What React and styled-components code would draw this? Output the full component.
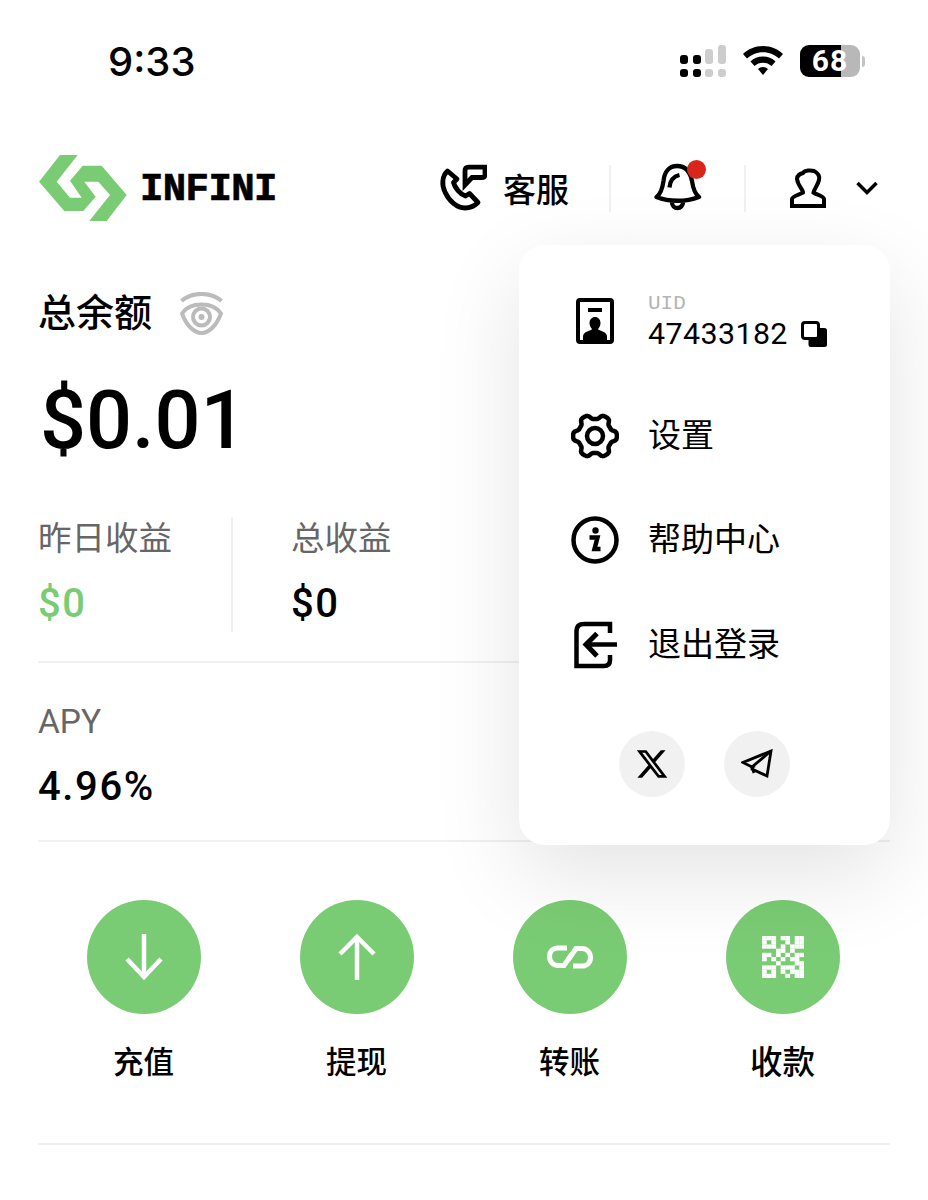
import React from 'react';
import styled, { createGlobalStyle } from 'styled-components';
import { FaXTwitter } from 'react-icons/fa6';

const CJK = `Roboto, 'Noto Sans CJK SC', sans-serif`;
const GREEN = '#7acc74';

const GlobalStyle = createGlobalStyle`
  html, body {
    margin: 0;
    background: #fff;
  }
  body {
    font-family: ${CJK};
    color: #000;
  }
`;

const Screen = styled.div`
  position: relative;
  width: 928px;
  height: 1200px;
  overflow: hidden;
  background: #fff;
`;

const StatusBar = styled.div`
  display: flex;
  align-items: center;
  justify-content: space-between;
  height: 32px;
  padding: 45px 63px 0 108px;
`;

const Time = styled.div`
  margin-top: 2px;
  font-family: Inter, sans-serif;
  font-size: 40px;
  font-weight: 500;
  line-height: 32px;
`;

const StatusIcons = styled.div`
  display: flex;
  align-items: center;
  gap: 17px;
`;

const Battery = styled.div`
  width: 60px;
  height: 32px;
  border-radius: 9px;
  background: linear-gradient(90deg, #000 0 41px, #b8b8b8 41px);
  color: #fff;
  font-size: 30px;
  font-weight: 700;
  line-height: 32px;
  text-align: center;
  letter-spacing: 1px;
`;

const BatteryWrap = styled.div`
  display: flex;
  align-items: center;
  gap: 2px;
`;

const BatteryNub = styled.div`
  width: 3px;
  height: 11px;
  border-radius: 0 3px 3px 0;
  background: #c4c4c4;
`;

const Header = styled.header`
  display: flex;
  align-items: center;
  height: 68px;
  margin-top: 77px;
  padding: 0 50px 0 39px;
`;

const Brand = styled.div`
  display: flex;
  align-items: center;
  gap: 13px;
  margin-right: auto;
`;

const BrandName = styled.div`
  padding-top: 5px;
  font-family: 'Liberation Mono', monospace;
  font-size: 39px;
  font-weight: 700;
  letter-spacing: -0.6px;
  line-height: 1;
  -webkit-text-stroke: 0.7px #000;
`;

const Support = styled.div`
  display: flex;
  align-items: center;
  gap: 16px;
  font-size: 33px;
  font-weight: 500;
`;

const HeaderRule = styled.div`
  width: 2px;
  height: 47px;
  background: #f0f0f0;
  margin: ${({ $margin }) => $margin};
`;

const BellWrap = styled.div`
  position: relative;
  width: 48px;
  height: 50px;
`;

const BellDot = styled.span`
  position: absolute;
  top: -3px;
  right: -4px;
  width: 19px;
  height: 19px;
  border-radius: 50%;
  background: #d9261c;
`;

const UserButton = styled.div`
  display: flex;
  align-items: center;
  gap: 30px;
`;

const Section = styled.section`
  margin: 0 38px;
  border-bottom: 2px solid #f0f0f0;
`;

const BalanceHead = styled.div`
  display: flex;
  align-items: center;
  gap: 28px;
  margin-top: 65px;
  height: 52px;
`;

const BalanceTitle = styled.div`
  font-size: 38px;
  font-weight: 500;
  line-height: 50px;
`;

const BalanceAmount = styled.div`
  margin: 32px 0 0 2px;
  font-size: 81px;
  font-weight: 500;
  line-height: 100px;
`;

const Stats = styled.div`
  display: flex;
  margin-top: 46px;
  padding-bottom: 29px;
`;

const Stat = styled.div`
  width: ${({ $width }) => $width};
  height: 115px;
  box-sizing: border-box;
  padding-top: 2px;
  border-right: ${({ $rule }) => ($rule ? '2px solid #f0f0f0' : 'none')};
  margin-right: ${({ $rule }) => ($rule ? '58px' : '0')};
`;

const Label = styled.div`
  font-size: 33.5px;
  line-height: 40px;
  color: #666;
`;

const Value = styled.div`
  margin-top: 22px;
  font-size: 40px;
  font-weight: 500;
  line-height: 46px;
  letter-spacing: 1.6px;
  color: ${({ $green }) => ($green ? GREEN : '#000')};
`;

const ApyBlock = styled.div`
  padding: 39px 0 30px;
`;

const Actions = styled.div`
  display: grid;
  grid-template-columns: repeat(4, 213px);
  margin-left: -1px;
  padding: 58px 0 60px;
`;

const Action = styled.div`
  display: flex;
  flex-direction: column;
  align-items: center;
  gap: 29px;
`;

const ActionCircle = styled.div`
  display: flex;
  align-items: center;
  justify-content: center;
  width: 114px;
  height: 114px;
  border-radius: 50%;
  background: ${GREEN};
`;

const ActionLabel = styled.div`
  font-size: ${({ $size }) => $size || '30.5px'};
  font-weight: 500;
  line-height: 40px;
`;

const Menu = styled.div`
  position: absolute;
  top: 245px;
  left: 519px;
  width: 371px;
  height: 600px;
  border-radius: 26px;
  background: #fff;
  box-shadow: 0 30px 90px rgba(0, 0, 0, 0.11);
  padding: 0 0 0 52px;
  box-sizing: border-box;
`;

const MenuRow = styled.div`
  display: flex;
  align-items: center;
  height: 104.5px;
  gap: 29px;
  font-size: 33px;
  line-height: 40px;
`;

const IconSlot = styled.div`
  display: flex;
  align-items: center;
  justify-content: center;
  flex: none;
  width: 48px;
`;

const UidRow = styled(MenuRow)`
  margin: 24px 0 10px;
`;

const UidBlock = styled.div`
  margin-top: 5px;
`;

const UidLabel = styled.div`
  font-family: 'Liberation Mono', monospace;
  font-size: 21px;
  line-height: 18px;
  color: #b4b4b4;
`;

const UidValue = styled.div`
  display: flex;
  align-items: center;
  gap: 13px;
  margin-top: 3px;
  font-size: 30.4px;
  line-height: 36px;
  letter-spacing: 0.4px;
`;

const Socials = styled.div`
  display: flex;
  gap: 39px;
  margin: 34px 0 0 48px;
`;

const SocialButton = styled.div`
  display: flex;
  align-items: center;
  justify-content: center;
  width: 66px;
  height: 66px;
  border-radius: 50%;
  background: #f1f1f1;
`;

const Signal = () => (
  <svg width="46" height="32" viewBox="0 0 46 32">
    <g fill="#000">
      <rect x="0" y="10" width="8" height="9" rx="3" />
      <rect x="13" y="10" width="8" height="9" rx="3" />
      <rect x="0" y="24" width="8" height="8" rx="3" />
      <rect x="13" y="24" width="8" height="8" rx="3" />
    </g>
    <g fill="#cdcdcd">
      <rect x="25" y="4" width="8" height="15" rx="3" />
      <rect x="38" y="0" width="8" height="19" rx="3" />
      <rect x="25" y="24" width="8" height="8" rx="3" />
      <rect x="38" y="24" width="8" height="8" rx="3" />
    </g>
  </svg>
);

const Wifi = () => (
  <svg width="40" height="30" viewBox="0 0 40 30" fill="#000">
    <path d="M20 0C28 0 35 3 40 8L36 12.500C32 8.700 26.300 6.200 20 6.200S8 8.700 4 12.500L0 8C5 3 12 0 20 0Z" />
    <path d="M20 10.500C25 10.500 29.300 12.300 32.500 15.500L28.500 20C26.300 17.900 23.300 16.700 20 16.700S13.700 17.900 11.500 20L7.500 15.500C10.700 12.300 15 10.500 20 10.500Z" />
    <path d="M20 21C22 21 23.700 21.700 25 23L20 29L15 23C16.300 21.700 18 21 20 21Z" />
  </svg>
);

const Logo = () => (
  <svg width="88" height="66" viewBox="0 0 88 66" fill={GREEN}>
    <path d="M21 0H38.700L17.700 26.700L31 42.700H42.700L31 25.700L43.700 10.700H62.700L87.700 40L67.700 66H50.300L71 40L59.300 26.700H45.300L56.700 41.700L44.300 56H25.300L0 26.700Z" />
  </svg>
);

const PhoneChat = () => (
  <svg width="48" height="48" viewBox="0 0 48 48" fill="none" stroke="#000" strokeWidth="4.800">
    <path d="M8.500 7C3 12 2.500 21 6 28C10 37 18 44 26 44C31 44 35 42.500 39 38.500L30.500 29.500L26.500 32C21 30 16 24 14.500 18.500L18 15Z" strokeLinejoin="round" />
    <path d="M26 21V7C26 4.500 27 3.200 29.500 3.200H46V10.500C46 12.500 45 13.500 43 13.500H33Z" />
  </svg>
);

const Bell = () => (
  <svg width="48" height="50" viewBox="0 0 48 50" fill="none" stroke="#000" strokeWidth="4.300">
    <path d="M2.500 34C7 31 8.500 25 9.500 18C10.500 8 16 3 23 3C31 3 36 8 38 18C39 25 41 31 45 34C32 39 15 39 2.500 34Z" strokeLinejoin="round" />
    <path d="M15.500 24.500C16 18 19 13.500 25.500 12" />
    <path d="M18 39.500A5.500 5.500 0 1 0 29 39.500" />
  </svg>
);

const User = () => (
  <svg width="36" height="40" viewBox="0 0 36 40" fill="none" stroke="#000" strokeWidth="4">
    <path d="M2 38V31C2 28 9 27 13 24.500C13.500 22 8 18 7 11C7 7 10 6 13 5C15 2 21 2 24 3C28 5 30 8 29 12C28 17 24 21 23.500 24.500C27 27 34 28 34 31V38Z" />
  </svg>
);

const Chevron = () => (
  <svg width="22" height="14" viewBox="0 0 22 14" fill="none" stroke="#000" strokeWidth="3.500">
    <path d="M1.500 2L11 11.500L20.500 2" />
  </svg>
);

const Eye = () => (
  <svg width="43" height="43" viewBox="0 0 43 43" fill="none" stroke="#bbb" strokeWidth="4">
    <path d="M1.500 9C12 -0.500 31 -0.500 41.500 9" />
    <path d="M2 21.500C10 9.500 33 9.500 41 21.500C36 35 28 41 21.500 41C15 41 7 35 2 21.500Z" />
    <circle cx="21.500" cy="25" r="8.500" />
    <circle cx="21.500" cy="25" r="3" fill="#bbb" stroke="none" />
  </svg>
);

const IdCard = () => (
  <svg width="38" height="46" viewBox="0 0 38 46" fill="#000">
    <path fillRule="evenodd" d="M4 0H34A4 4 0 0 1 38 4V42A4 4 0 0 1 34 46H4A4 4 0 0 1 0 42V4A4 4 0 0 1 4 0ZM4 4V42H34V4Z" />
    <rect x="12" y="10" width="14" height="4" />
    <path d="M19 19C22 19 24.500 21.500 24.500 25C24.500 28 23 30 22 31C23 33 30 33 31 38V43H7V38C8 33 15 33 16 31C15 30 13.500 28 13.500 25C13.500 21.500 16 19 19 19Z" />
  </svg>
);

const gearPath = () => {
  const points = [];
  for (let i = 0; i < 120; i++) {
    const a = (i / 120) * Math.PI * 2;
    const r = 19.500 + 2.500 * Math.tanh(2 * Math.cos(a * 6));
    points.push(`${(24 + r * Math.cos(a)).toFixed(2)} ${(24 + r * Math.sin(a)).toFixed(2)}`);
  }
  return `M${points.join('L')}Z`;
};

const Gear = () => (
  <svg width="48" height="48" viewBox="0 0 48 48" fill="none" stroke="#000" strokeWidth="4.500">
    <path d={gearPath()} strokeLinejoin="round" />
    <circle cx="24" cy="24" r="8" />
  </svg>
);

const Info = () => (
  <svg width="48" height="48" viewBox="0 0 48 48" fill="none">
    <circle cx="24" cy="24" r="21.500" stroke="#000" strokeWidth="4.500" />
    <circle cx="24.500" cy="14.500" r="3.200" fill="#000" />
    <path d="M18.500 21.500H26.500L23.500 33H29.500" stroke="#000" strokeWidth="4.500" />
  </svg>
);

const Logout = () => (
  <svg width="43" height="48" viewBox="0 0 43 48" fill="none" stroke="#000" strokeWidth="4.500">
    <path d="M36 12V3H10C5 3 2.500 5.500 2.500 10V45H30C34 45 36 43 36 39V34" />
    <path d="M43 23.500H13" />
    <path d="M23 12.500L12 23.500L23 35" strokeWidth="5" />
  </svg>
);

const Copy = () => (
  <svg width="26" height="26" viewBox="0 0 26 26">
    <path d="M10 7H23.500A2.500 2.500 0 0 1 26 9.500V23.500A2.500 2.500 0 0 1 23.500 26H10A2.500 2.500 0 0 1 7.500 23.500V9.500A2.500 2.500 0 0 1 10 7Z" fill="#000" />
    <rect x="1.500" y="1.500" width="16" height="16" rx="2.500" fill="#fff" stroke="#000" strokeWidth="3" />
  </svg>
);

const Plane = () => (
  <svg width="32" height="30" viewBox="0 0 32 30" fill="none" stroke="#000" strokeWidth="2.800">
    <path d="M30 2L2 13.500L11 18L14 17L11 18V20L26 27Z" />
    <path d="M30 2L11 18L13 24" />
  </svg>
);

const ArrowDown = () => (
  <svg width="38" height="48" viewBox="0 0 38 48" fill="none" stroke="#fff" strokeWidth="4.500">
    <path d="M19 1V44" />
    <path d="M2 26L19 44L36 26" />
  </svg>
);

const ArrowUp = () => (
  <svg width="38" height="48" viewBox="0 0 38 48" fill="none" stroke="#fff" strokeWidth="4.500">
    <path d="M19 47V4" />
    <path d="M2 21L19 4L36 21" />
  </svg>
);

const LinkIcon = () => (
  <svg width="46" height="24" viewBox="0 0 46 24" fill="none" stroke="#fff" strokeWidth="5">
    <path d="M20 3H11C6 3 2.500 6.500 2.500 11.500C2.500 16.500 6 20.500 11 20.500H17L25 9" />
    <path d="M26 21H35C40 21 43.500 17.500 43.500 12.500C43.500 7.500 40 3.500 35 3.500H29L21 15" />
  </svg>
);

// cells of the qr glyph, drawn on a 9x10 grid
const QR_CELLS = [
  '111011011',
  '101001011',
  '111010111',
  '000110100',
  '110101011',
  '101010110',
  '000100011',
  '111011101',
  '101010111',
  '111001011',
];

const QrIcon = () => (
  <svg width="42" height="42" viewBox="0 0 9 10" preserveAspectRatio="none" fill="#fff">
    {QR_CELLS.flatMap((row, y) =>
      row.split('').map((c, x) => (c === '1' ? <rect key={`${x}-${y}`} x={x} y={y} width="1.020" height="1.020" /> : null))
    )}
  </svg>
);

const ACTIONS = [
  { label: '充值', icon: <ArrowDown /> },
  { label: '提现', icon: <ArrowUp /> },
  { label: '转账', icon: <LinkIcon /> },
  { label: '收款', icon: <QrIcon />, size: '32.5px' },
];

const App = () => (
  <Screen>
    <GlobalStyle />
    <StatusBar>
      <Time>9:33</Time>
      <StatusIcons>
        <Signal />
        <Wifi />
        <BatteryWrap>
          <Battery>68</Battery>
          <BatteryNub />
        </BatteryWrap>
      </StatusIcons>
    </StatusBar>

    <Header>
      <Brand>
        <Logo />
        <BrandName>INFINI</BrandName>
      </Brand>
      <Support>
        <PhoneChat />
        客服
      </Support>
      <HeaderRule $margin="0 43px 0 40px" />
      <BellWrap>
        <Bell />
        <BellDot />
      </BellWrap>
      <HeaderRule $margin="0 44px 0 42px" />
      <UserButton>
        <User />
        <Chevron />
      </UserButton>
    </Header>

    <Section>
      <BalanceHead>
        <BalanceTitle>总余额</BalanceTitle>
        <Eye />
      </BalanceHead>
      <BalanceAmount>$0.01</BalanceAmount>
      <Stats>
        <Stat $width="195px" $rule>
          <Label>昨日收益</Label>
          <Value $green>$0</Value>
        </Stat>
        <Stat $width="200px">
          <Label>总收益</Label>
          <Value>$0</Value>
        </Stat>
      </Stats>
    </Section>

    <Section>
      <ApyBlock>
        <Label>APY</Label>
        <Value>4.96%</Value>
      </ApyBlock>
    </Section>

    <Section>
      <Actions>
        {ACTIONS.map((action) => (
          <Action key={action.label}>
            <ActionCircle>{action.icon}</ActionCircle>
            <ActionLabel $size={action.size}>{action.label}</ActionLabel>
          </Action>
        ))}
      </Actions>
    </Section>

    <Menu>
      <UidRow>
        <IconSlot>
          <IdCard />
        </IconSlot>
        <UidBlock>
          <UidLabel>UID</UidLabel>
          <UidValue>
            47433182
            <Copy />
          </UidValue>
        </UidBlock>
      </UidRow>
      <MenuRow>
        <IconSlot>
          <Gear />
        </IconSlot>
        设置
      </MenuRow>
      <MenuRow>
        <IconSlot>
          <Info />
        </IconSlot>
        帮助中心
      </MenuRow>
      <MenuRow>
        <IconSlot>
          <Logout />
        </IconSlot>
        退出登录
      </MenuRow>
      <Socials>
        <SocialButton>
          <FaXTwitter size={34} />
        </SocialButton>
        <SocialButton>
          <Plane />
        </SocialButton>
      </Socials>
    </Menu>
  </Screen>
);

export default App;
